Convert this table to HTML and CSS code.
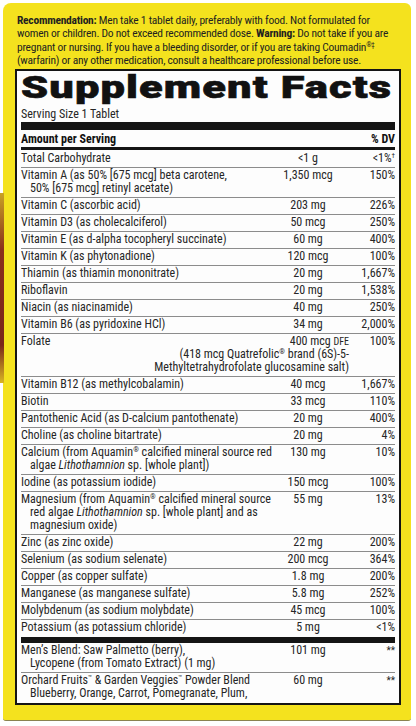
FILE: index.html
```html
<!doctype html>
<html lang="en">
  <head>
    <meta charset="utf-8" />
    <meta name="viewport" content="width=device-width, initial-scale=1" />
    <title>Supplement Facts</title>
    <link rel="stylesheet" href="styles.css">
  </head>
  <body>
    <div class="box">
      <div class="edge"></div>
      <p class="note">
        <b>Recommendation:</b> Men take 1 tablet daily, preferably with food. Not formulated for<br>
        women or children. Do not exceed recommended dose. <b>Warning:</b> Do not take if you are<br>
        pregnant or nursing. If you have a bleeding disorder, or if you are taking Coumadin<sup>®‡</sup><br>
        (warfarin) or any other medication, consult a healthcare professional before use.
      </p>
      <div class="panel">
        <h1><span>Supplement Facts</span></h1>
        <div class="serving">Serving Size 1 Tablet</div>
        <div class="bar thick"></div>
        <div class="head">
          <span>Amount per Serving</span>
          <span>% DV</span>
        </div>
        <div class="bar mid"></div>
        <div class="rows">
          <div class="row first"><span class="name">Total Carbohydrate</span><span class="amt">&lt;1 g</span><span class="dv">&lt;1%<sup>†</sup></span></div>
          <div class="row"><span class="name">Vitamin A (as 50% [675 mcg] beta carotene,<br>50% [675 mcg] retinyl acetate)</span><span class="amt">1,350 mcg</span><span class="dv">150%</span></div>
          <div class="row"><span class="name">Vitamin C (ascorbic acid)</span><span class="amt">203 mg</span><span class="dv">226%</span></div>
          <div class="row"><span class="name">Vitamin D3 (as cholecalciferol)</span><span class="amt">50 mcg</span><span class="dv">250%</span></div>
          <div class="row"><span class="name">Vitamin E (as d-alpha tocopheryl succinate)</span><span class="amt">60 mg</span><span class="dv">400%</span></div>
          <div class="row"><span class="name">Vitamin K (as phytonadione)</span><span class="amt">120 mcg</span><span class="dv">100%</span></div>
          <div class="row"><span class="name">Thiamin (as thiamin mononitrate)</span><span class="amt">20 mg</span><span class="dv">1,667%</span></div>
          <div class="row"><span class="name">Riboflavin</span><span class="amt">20 mg</span><span class="dv">1,538%</span></div>
          <div class="row"><span class="name">Niacin (as niacinamide)</span><span class="amt">40 mg</span><span class="dv">250%</span></div>
          <div class="row"><span class="name">Vitamin B6 (as pyridoxine HCl)</span><span class="amt">34 mg</span><span class="dv">2,000%</span></div>
          <div class="row"><span class="name">Folate</span><span class="amt wide">400 mcg <small>DFE</small><br>(418 mcg Quatrefolic<sup>®</sup> brand (6S)-5-<br>Methyltetrahydrofolate glucosamine salt)</span><span class="dv">100%</span></div>
          <div class="row"><span class="name">Vitamin B12 (as methylcobalamin)</span><span class="amt">40 mcg</span><span class="dv">1,667%</span></div>
          <div class="row"><span class="name">Biotin</span><span class="amt">33 mcg</span><span class="dv">110%</span></div>
          <div class="row"><span class="name">Pantothenic Acid (as D-calcium pantothenate)</span><span class="amt">20 mg</span><span class="dv">400%</span></div>
          <div class="row"><span class="name">Choline (as choline bitartrate)</span><span class="amt">20 mg</span><span class="dv">4%</span></div>
          <div class="row"><span class="name">Calcium (from Aquamin<sup>®</sup> calcified mineral source red<br>algae <i>Lithothamnion</i> sp. [whole plant])</span><span class="amt">130 mg</span><span class="dv">10%</span></div>
          <div class="row"><span class="name">Iodine (as potassium iodide)</span><span class="amt">150 mcg</span><span class="dv">100%</span></div>
          <div class="row"><span class="name">Magnesium (from Aquamin<sup>®</sup> calcified mineral source<br>red algae <i>Lithothamnion</i> sp. [whole plant] and as<br>magnesium oxide)</span><span class="amt">55 mg</span><span class="dv">13%</span></div>
          <div class="row"><span class="name">Zinc (as zinc oxide)</span><span class="amt">22 mg</span><span class="dv">200%</span></div>
          <div class="row"><span class="name">Selenium (as sodium selenate)</span><span class="amt">200 mcg</span><span class="dv">364%</span></div>
          <div class="row"><span class="name">Copper (as copper sulfate)</span><span class="amt">1.8 mg</span><span class="dv">200%</span></div>
          <div class="row"><span class="name">Manganese (as manganese sulfate)</span><span class="amt">5.8 mg</span><span class="dv">252%</span></div>
          <div class="row"><span class="name">Molybdenum (as sodium molybdate)</span><span class="amt">45 mcg</span><span class="dv">100%</span></div>
          <div class="row last"><span class="name">Potassium (as potassium chloride)</span><span class="amt">5 mg</span><span class="dv">&lt;1%</span></div>
        </div>
        <div class="bar low"></div>
        <div class="rows">
          <div class="row"><span class="name">Men’s Blend: Saw Palmetto (berry),<br>Lycopene (from Tomato Extract) (1 mg)</span><span class="amt">101 mg</span><span class="dv stars">**</span></div>
          <div class="row last"><span class="name">Orchard Fruits<sup>™</sup> &amp; Garden Veggies<sup>™</sup> Powder Blend<br>Blueberry, Orange, Carrot, Pomegranate, Plum,</span><span class="amt">60 mg</span><span class="dv stars">**</span></div>
        </div>
      </div>
    </div>
  </body>
</html>
```

FILE: styles.css
```css
body {
  margin: 0;
  background: #fff;
  font-family: Roboto, "Liberation Sans", sans-serif;
  font-stretch: 75%;
  color: #262626;
}
.box {
  position: relative;
  margin: 3px 5px 0 3px;
  height: 718px;
  box-sizing: border-box;
  padding: 11px 10px 0 12px;
  background: #f4e21e;
  border-radius: 8px 6px 3px 3px;
  border-bottom: 1px solid #8a8350;
}
.edge {
  position: absolute;
  left: -3px;
  top: 190px;
  width: 4px;
  height: 190px;
  background: linear-gradient(#c9a224, #8a2f1c 30%, #7a261a 80%, #d9b623);
}
.note {
  margin: 0 0 1px 2px;
  font-size: 11.5px;
  letter-spacing: -0.25px;
  line-height: 13.4px;
  white-space: nowrap;
  color: #231f20;
}
.note b {
  font-weight: bold;
}
sup {
  font-size: 0.6em;
  line-height: 0;
  vertical-align: 0.6em;
}
.panel {
  box-sizing: border-box;
  background: #fdfdfd;
  border: 2.5px solid #151515;
  padding: 0 4px;
  height: 636px;
  overflow: hidden;
}
h1 {
  margin: 0;
  height: 34px;
  font-family: Roboto, "Liberation Sans", sans-serif;
  font-stretch: 100%;
  font-size: 31px;
  line-height: 34px;
  font-weight: 900;
  color: #111;
  white-space: nowrap;
}
h1 span {
  display: inline-block;
  transform: scaleX(1.4);
  transform-origin: left center;
  letter-spacing: 0.8px;
  -webkit-text-stroke: 0.6px #111;
}
.serving {
  font-size: 12px;
  line-height: 14px;
  padding: 2px 0 1.5px;
}
.bar {
  background: #151515;
}
.thick {
  height: 8px;
}
.mid {
  height: 3px;
}
.low {
  height: 6px;
  margin-top: 1px;
}
.head {
  display: flex;
  justify-content: space-between;
  font-size: 12px;
  font-weight: bold;
  line-height: 14px;
  padding: 2px 0 1px;
  color: #111;
}
.rows {
  display: grid;
}
.row {
  display: grid;
  grid-template-columns: minmax(0, 1fr) 92px 41px;
  font-size: 12px;
  line-height: 13px;
  padding: 1.5px 0;
  border-bottom: 1px solid #8c8c8c;
}
.row.first {
  padding-top: 2px;
}
.row.last {
  border-bottom: none;
}
.name {
  grid-column: 1;
  grid-row: 1;
  padding-left: 9px;
  text-indent: -9px;
  white-space: nowrap;
}
.amt {
  grid-column: 2;
  grid-row: 1;
  text-align: center;
}
.amt.wide {
  grid-column: 1 / 3;
  text-align: right;
  padding-right: 5px;
}
.amt small {
  font-size: 10px;
}
.dv {
  grid-column: 3;
  grid-row: 1;
  text-align: right;
}
.stars {
  font-size: 10px;
}
```
